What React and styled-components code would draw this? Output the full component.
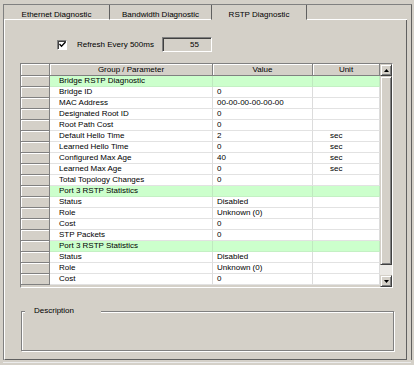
import React from "react";
import styled, { createGlobalStyle } from "styled-components";

const Global = createGlobalStyle`
  html, body { margin: 0; padding: 0; background: #d4d0c8; }
  body { font-family: "Liberation Sans", Arial, sans-serif; font-size: 8px; color: #000; }
  * { box-sizing: border-box; }
`;

const Root = styled.div`
  width: 414px;
  height: 365px;
  overflow: hidden;
  padding-top: 4px;
  padding-left: 3px;
`;

const Frame = styled.div`
  width: 409px;
  border-top: 1px solid #808080;
  border-left: 1px solid #808080;
  border-right: 1px solid #606060;
`;

const TabStrip = styled.div`
  display: flex;
  height: 15px;
`;

const Tab = styled.div`
  width: ${(p) => p.$w}px;
  height: 15px;
  padding-top: 5px;
  line-height: 9px;
  text-align: center;
  white-space: nowrap;
  border-bottom: 1px solid ${(p) => (p.$active ? "transparent" : "#ffffff")};
  border-left: ${(p) => (p.$active ? "1px solid #606060" : "none")};
  border-right: ${(p) => (p.$sep ? "1px solid #606060" : "none")};
`;

const TabFiller = styled.div`
  flex: 1;
  border-bottom: 1px solid #ffffff;
  margin-right: 4px;
`;

const Panel = styled.div`
  width: 403px;
  height: 340px;
  border-left: 1px solid #ffffff;
  border-right: 1px solid #606060;
  border-bottom: 1px solid #606060;
  display: flex;
  flex-direction: column;
`;

const RefreshRow = styled.div`
  display: flex;
  align-items: center;
  margin-top: 17px;
  height: 15px;
  padding-left: 52px;
`;

const CheckBox = styled.div`
  width: 10px;
  height: 10px;
  background: #ffffff;
  border-top: 1px solid #808080;
  border-left: 1px solid #808080;
  border-bottom: 1px solid #ffffff;
  border-right: 1px solid #ffffff;
  box-shadow: inset 1px 1px 0 #404040;
  display: flex;
  align-items: center;
  justify-content: center;
`;

const Label = styled.span`
  margin-left: 10px;
  line-height: 10px;
  white-space: nowrap;
`;

const ValueBox = styled.div`
  margin-left: 8px;
  width: 50px;
  height: 15px;
  border-top: 1px solid #808080;
  border-left: 1px solid #808080;
  border-bottom: 1px solid #ffffff;
  border-right: 1px solid #ffffff;
  box-shadow: inset 1px 1px 0 #404040;
  text-align: right;
  padding-right: 12px;
  line-height: 13px;
`;

const TableFrame = styled.div`
  margin-top: 11px;
  margin-left: 15px;
  width: 373px;
  height: 225px;
  display: flex;
  border-top: 1px solid #808080;
  border-left: 1px solid #808080;
  border-bottom: 1px solid #ffffff;
  border-right: 1px solid #ffffff;
  background: #d4d0c8;
`;

const Grid = styled.div`
  width: 359px;
  display: grid;
  grid-template-columns: 29px 163px 100px 67px;
  grid-auto-rows: 11px;
  grid-template-rows: 12px;
  align-content: start;
`;

const HeadCell = styled.div`
  background: #d4d0c8;
  border-right: 1px solid #808080;
  border-bottom: 1px solid #808080;
  box-shadow: inset 1px 1px 0 #ffffff;
  text-align: center;
  line-height: 11px;
  white-space: nowrap;
`;

const RowHead = styled.div`
  background: #d4d0c8;
  border-right: 1px solid #808080;
  border-bottom: 1px solid #808080;
  box-shadow: inset 1px 1px 0 #ffffff;
`;

const Cell = styled.div`
  background: ${(p) => (p.$group ? "#ccffcc" : "#ffffff")};
  border-right: 1px solid ${(p) => (p.$group ? "#bfe9bf" : "#dcdcdc")};
  border-bottom: 1px solid ${(p) => (p.$group ? "#c4f0c4" : "#e2e2e2")};
  padding-left: ${(p) => p.$pad}px;
  line-height: 10px;
  white-space: nowrap;
  overflow: hidden;
`;

const ScrollBar = styled.div`
  width: 12px;
  display: flex;
  flex-direction: column;
  background: #ebe9e5;
`;

const ScrollButton = styled.div`
  height: ${(p) => p.$h}px;
  background: #d4d0c8;
  border-top: 1px solid #d4d0c8;
  border-left: 1px solid #d4d0c8;
  border-right: 1px solid #404040;
  border-bottom: 1px solid #404040;
  box-shadow: inset 1px 1px 0 #ffffff, inset -1px -1px 0 #808080;
  display: flex;
  align-items: center;
  justify-content: center;
`;

const Track = styled.div`
  flex: 1;
  display: flex;
  flex-direction: column;
`;

const Arrow = ({ down }) => (
  <svg width="5" height="3" viewBox="0 0 5 3">
    <polygon points={down ? "0,0 5,0 2.5,3" : "2.5,0 5,3 0,3"} fill="#000" />
  </svg>
);

const GroupBox = styled.fieldset`
  margin: 18px 0 0 16px;
  padding: 0;
  width: 373px;
  height: 45px;
  border: 1px solid #808080;
  box-shadow: inset 1px 1px 0 #ffffff, 1px 1px 0 #ffffff;
`;

const Legend = styled.legend`
  margin-left: 3px;
  padding: 0 27px 0 9px;
  line-height: 10px;
  font-size: 8px;
  background: #d4d0c8;
`;

const BottomEdge = styled.div`
  margin-top: 2px;
  width: 408px;
  height: 1px;
  background: #ececec;
`;

const rows = [
  { g: true, p: "Bridge RSTP Diagnostic" },
  { p: "Bridge ID", v: "0" },
  { p: "MAC Address", v: "00-00-00-00-00-00" },
  { p: "Designated Root ID", v: "0" },
  { p: "Root Path Cost", v: "0" },
  { p: "Default Hello Time", v: "2", u: "sec" },
  { p: "Learned Hello Time", v: "0", u: "sec" },
  { p: "Configured Max Age", v: "40", u: "sec" },
  { p: "Learned Max Age", v: "0", u: "sec" },
  { p: "Total Topology Changes", v: "0" },
  { g: true, p: "Port 3 RSTP Statistics" },
  { p: "Status", v: "Disabled" },
  { p: "Role", v: "Unknown (0)" },
  { p: "Cost", v: "0" },
  { p: "STP Packets", v: "0" },
  { g: true, p: "Port 3 RSTP Statistics" },
  { p: "Status", v: "Disabled" },
  { p: "Role", v: "Unknown (0)" },
  { p: "Cost", v: "0" },
];

export default function App() {
  return (
    <Root>
      <Global />
      <Frame>
        <TabStrip>
          <Tab $w={106} $sep>Ethernet Diagnostic</Tab>
          <Tab $w={101}>Bandwidth Diagnostic</Tab>
          <Tab $w={96} $active $sep>RSTP Diagnostic</Tab>
          <TabFiller />
        </TabStrip>
        <Panel>
          <RefreshRow>
            <CheckBox>
              <svg width="7" height="7" viewBox="0 0 7 7">
                <polyline points="0.5,3 2.5,5.2 6.5,1" fill="none" stroke="#000" strokeWidth="1.3" />
              </svg>
            </CheckBox>
            <Label>Refresh Every 500ms</Label>
            <ValueBox>55</ValueBox>
          </RefreshRow>
          <TableFrame>
            <Grid>
              <HeadCell />
              <HeadCell>Group / Parameter</HeadCell>
              <HeadCell>Value</HeadCell>
              <HeadCell>Unit</HeadCell>
              {rows.map((r, i) => (
                <React.Fragment key={i}>
                  <RowHead />
                  <Cell $group={r.g} $pad={9}>{r.p}</Cell>
                  <Cell $group={r.g} $pad={4}>{r.v}</Cell>
                  <Cell $group={r.g} $pad={17}>{r.u}</Cell>
                </React.Fragment>
              ))}
            </Grid>
            <ScrollBar>
              <ScrollButton $h={12}><Arrow /></ScrollButton>
              <Track>
                <ScrollButton $h={189} />
              </Track>
              <ScrollButton $h={12}><Arrow down /></ScrollButton>
            </ScrollBar>
          </TableFrame>
          <GroupBox>
            <Legend>Description</Legend>
          </GroupBox>
        </Panel>
      </Frame>
      <BottomEdge />
    </Root>
  );
}
